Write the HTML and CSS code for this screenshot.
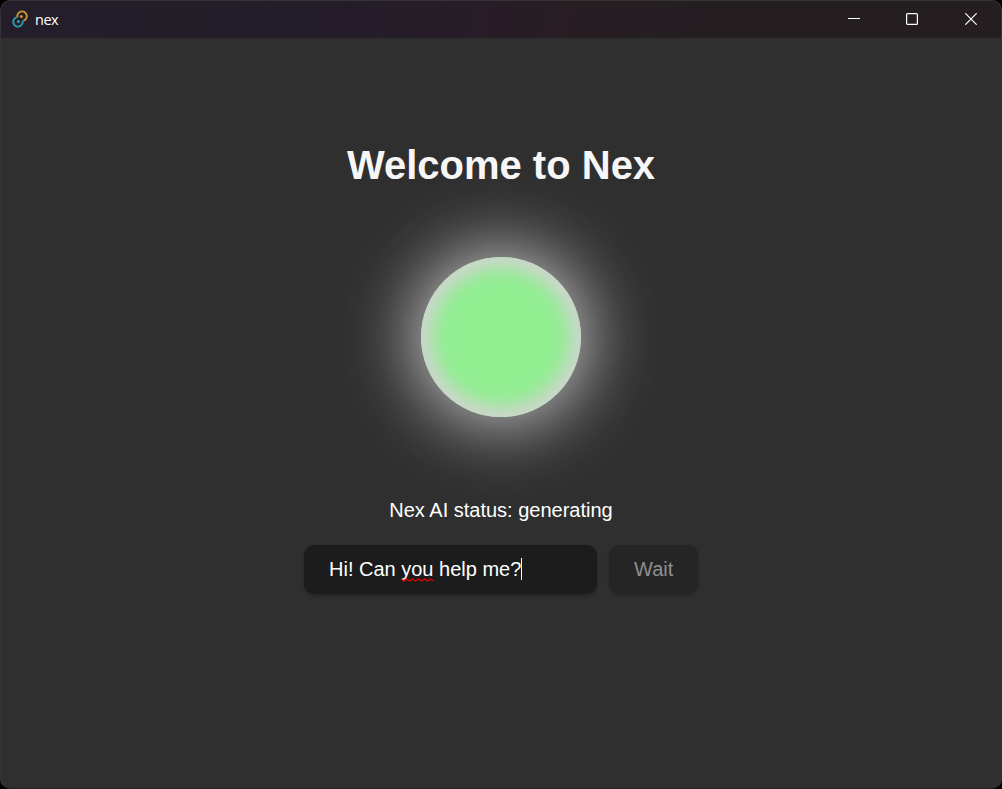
FILE: index.html
```html
<!DOCTYPE html>
<html lang="en">
<head>
<meta charset="utf-8">
<title>nex</title>
<link rel="stylesheet" href="styles.css">
</head>
<body>
<div class="window">
  <header class="titlebar">
    <svg class="logo" width="16" height="18" viewBox="0 0 16 18" fill="none" stroke-width="2">
      <path d="M5.5 7.4A4.7 4.7 0 1 1 11.5 10.6" stroke="#c9952f"/>
      <path d="M10.5 10.6A4.7 4.7 0 1 1 4.5 7.4" stroke="#2a9bae"/>
      <circle cx="9.3" cy="6.5" r="1.5" fill="#c9952f"/>
      <circle cx="6.4" cy="11.5" r="1.5" fill="#2a9bae"/>
    </svg>
    <span class="name">nex</span>
    <div class="controls">
      <svg width="12" height="12" viewBox="0 0 12 12"><path d="M0 5.5h12" stroke="#fff"/></svg>
      <svg width="12" height="12" viewBox="0 0 12 12"><rect x=".6" y=".6" width="10.8" height="10.8" rx="1" fill="none" stroke="#fff" stroke-width="1.2"/></svg>
      <svg class="close" width="12" height="12" viewBox="0 0 12 12"><path d="M.3.3l11.4 11.4M11.7.3.3 11.7" stroke="#fff" stroke-width="1.2"/></svg>
    </div>
  </header>
  <main class="container">
    <h1>Welcome to Nex</h1>
    <div class="orb"></div>
    <p class="status">Nex AI status: generating</p>
    <form class="row">
      <div class="field"><span>Hi! Can <span class="misspelt">you<svg class="squiggle" width="33" height="4" viewBox="0 0 33 4" fill="none"><path d="M0 .8 2.5 3 5.5 1 8.5 3 11.5 1 14.5 3 17.5 1 20.5 3 23.5 1 26.5 3 29.5 1 32.5 3" stroke="#e80000" stroke-width="1.4"/></svg></span> help me?</span><i class="caret"></i></div>
      <button class="send" type="button" disabled>Wait</button>
    </form>
  </main>
  <i class="edge edge-a"></i><i class="edge edge-b"></i><i class="edge edge-c"></i>
</div>
</body>
</html>
```
FILE: styles.css
```css
* { box-sizing: border-box; }
body {
  margin: 0;
  background: #000;
  font-family: "Liberation Sans", Arial, sans-serif;
  font-size: 20px;
  line-height: 30px;
  color: #f6f6f6;
}
.window {
  position: relative;
  height: 789px;
  overflow: hidden;
  border: 1px solid #343434;
  border-bottom-color: #291f23;
  border-radius: 10px;
  background: #2f2f2f;
}
.titlebar {
  display: flex;
  align-items: center;
  height: 37px;
  padding: 0 24px 0 11px;
  background: linear-gradient(100deg, #231e29 0%, #241d29 35%, #271c27 48%, #271d23 56%, #241e22 68%, #241e21 100%);
}
.logo { margin-bottom: 1px; }
.name {
  margin-left: 7px;
  font: 14.5px/20px "Open Sans", "Noto Sans", sans-serif;
  letter-spacing: -.5px;
  color: #fff;
}
.controls { display: flex; gap: 46px; margin: 0 0 2px auto; }
.controls svg { display: block; }
.controls .close { margin-left: 1px; }
.container {
  display: flex;
  flex-direction: column;
  align-items: center;
  padding-top: 97px;
}
h1 { margin: 0; font-size: 40px; line-height: 60px; font-weight: 700; }
.orb {
  width: 160px;
  height: 160px;
  margin-top: 62px;
  border-radius: 50%;
  background: #90ee90;
  box-shadow: inset 0 0 19px 10px #d3d3d3, 0 0 75px 5px #d3d3d3;
}
.status { margin: 78px 0 0; color: #fff; }
.row { display: flex; gap: 12px; margin: 20px 0 0; }
.field, .send {
  height: 49px;
  padding: 0 25px 2px;
  border-radius: 10px;
  box-shadow: 0 2px 3px rgba(0, 0, 0, .2);
}
.field {
  display: flex;
  align-items: center;
  width: 293px;
  background: #1c1c1c;
  color: #fff;
}
.misspelt { position: relative; }
.squiggle { position: absolute; left: 0; bottom: -2px; }
.caret { width: 1px; height: 22px; background: #fff; }
.send {
  width: 89px;
  border: 0;
  background: #252525;
  color: #8f8f8f;
  font: 20px/24px "Liberation Sans", Arial, sans-serif;
}
.edge { position: absolute; left: -1px; width: 1px; background: #808080; }
.edge-a { top: 299px; height: 10px; }
.edge-b { top: 438px; height: 8px; background: #606060; }
.edge-c { top: 456px; height: 14px; }
```
